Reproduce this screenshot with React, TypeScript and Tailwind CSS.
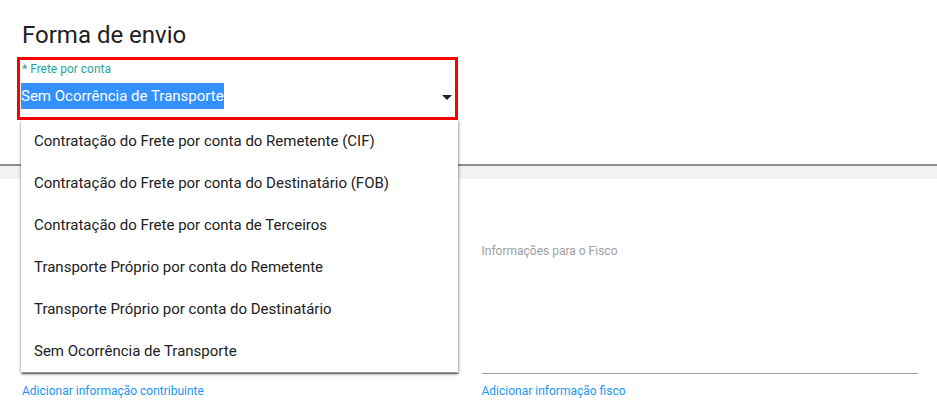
const options = [
  "Contratação do Frete por conta do Remetente (CIF)",
  "Contratação do Frete por conta do Destinatário (FOB)",
  "Contratação do Frete por conta de Terceiros",
  "Transporte Próprio por conta do Remetente",
  "Transporte Próprio por conta do Destinatário",
  "Sem Ocorrência de Transporte",
];

export default function App() {
  return (
    <div className="w-[937px] h-[415px] overflow-hidden bg-white font-['Roboto',sans-serif]">
      {/* Top card */}
      <div className="relative z-10 h-[166px] bg-white border-b-2 border-[#8f8f8f] pl-[17px] pr-[479px] pt-[19px]">
        <h2 className="ml-[5px] text-[24px] leading-[32px] font-normal text-[#212121]">Forma de envio</h2>

        <div className="relative mt-[6px] border-[3px] border-[#ff0000] pl-[1px] pr-[3px] pt-[1px] pb-[9px]">
          <div className="ml-[1px] text-[12px] leading-[16px] text-[#26a69a]">* Frete por conta</div>
          <div className="mt-[7px] flex items-center justify-between h-[24px]">
            <span className="py-[1px] text-[15px] leading-[24px] text-white bg-[#3390ff]">Sem Ocorrência de Transporte</span>
            <span className="w-0 h-0 border-l-[5px] border-r-[5px] border-t-[5px] border-l-transparent border-r-transparent border-t-[#212121] mt-[2px]" />
          </div>

          {/* Open dropdown */}
          <ul className="absolute left-[1px] top-[calc(100%+3px)] w-[437px] bg-white shadow-[0_2px_3px_rgba(0,0,0,0.45),1px_0_3px_rgba(0,0,0,0.15)]">
            {options.map((o) => (
              <li key={o} className="h-[42px] flex items-center px-[13px] text-[15px] text-[#212121]">
                {o}
              </li>
            ))}
          </ul>
        </div>
      </div>

      {/* Band */}
      <div className="h-[13px] bg-[#f2f2f2]" />

      {/* Bottom card */}
      <div className="grid grid-cols-2 gap-[23px] pl-[22px] pr-[19px] pt-[64px]">
        <div>
          <div className="h-[131px] border-b border-[#9e9e9e]" />
          <a className="block mt-[9px] text-[12px] leading-[16px] text-[#2196f3]">Adicionar informação contribuinte</a>
        </div>
        <div>
          <div className="h-[131px] border-b border-[#9e9e9e]">
            <div className="text-[12px] leading-[16px] text-[#9e9e9e]">Informações para o Fisco</div>
          </div>
          <a className="block mt-[9px] text-[12px] leading-[16px] text-[#2196f3]">Adicionar informação fisco</a>
        </div>
      </div>
    </div>
  );
}
